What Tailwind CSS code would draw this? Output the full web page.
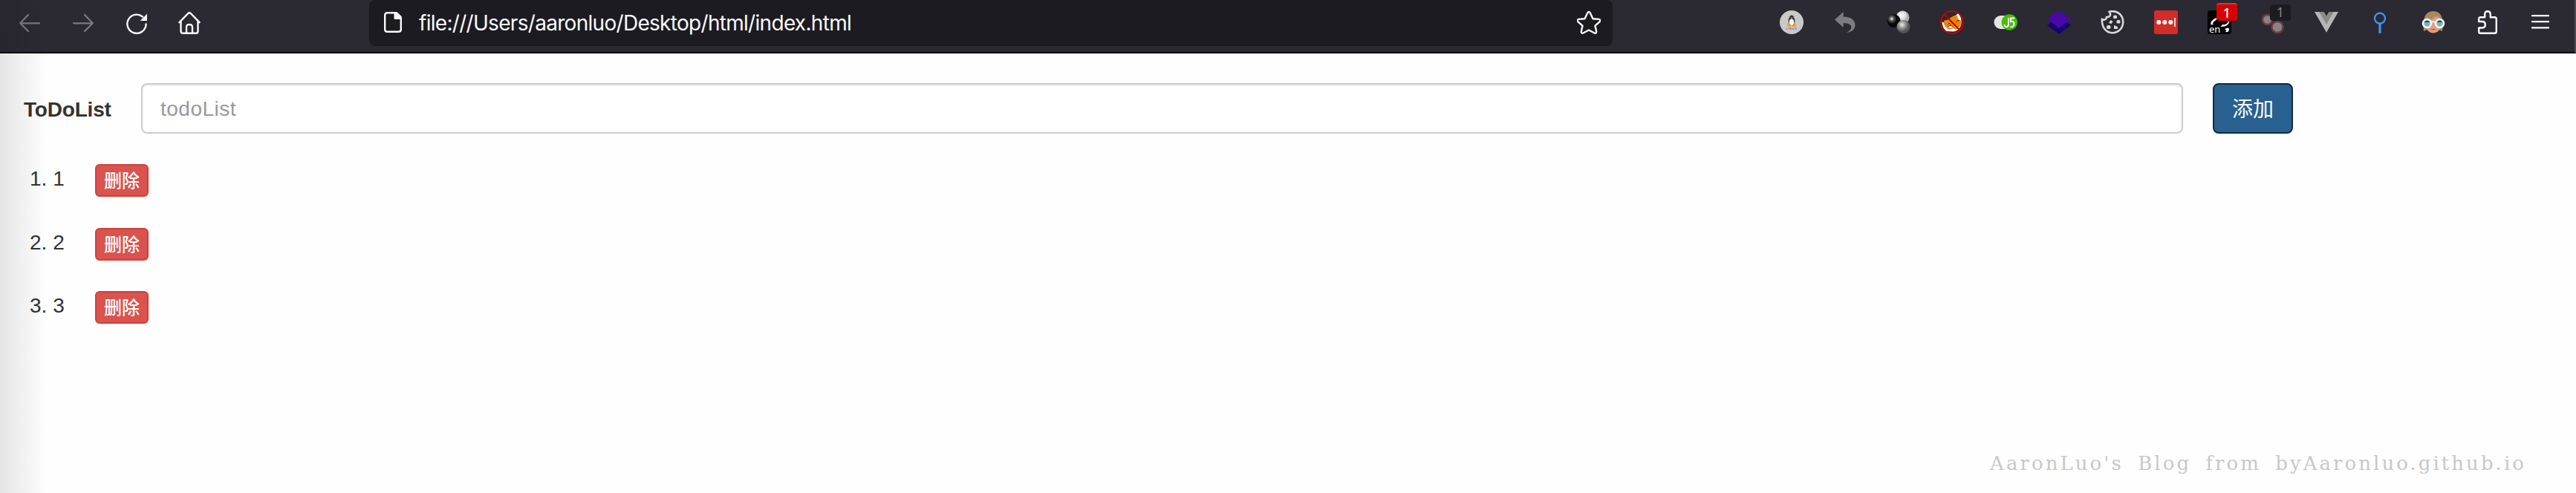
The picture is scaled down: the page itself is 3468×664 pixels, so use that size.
<!DOCTYPE html>
<html lang="zh">
<head>
<meta charset="utf-8">
<title>ToDoList</title>
<script src="https://cdn.jsdelivr.net/npm/@tailwindcss/browser@4"></script>
</head>
<body class="relative flex h-[664px] w-[3468px] flex-col overflow-hidden bg-[#fefefe] text-[28px] text-[#333] font-['Liberation_Sans','Noto_Sans_CJK_SC',sans-serif]">
<header class="flex h-[72px] shrink-0 items-start border-b-2 border-r-2 border-b-[#0c0b10] border-r-[#4d4c54] bg-[#2b2a33]">
  <nav class="flex w-[497px] shrink-0 gap-10 pl-6 pt-[14px]">
    <svg class="size-8" viewBox="0 0 32 32" fill="none" stroke="#7b7a80" stroke-width="2.2" stroke-linecap="round" stroke-linejoin="round"><path d="M29 17.3H3.2M14 6 3.2 17.3 14 28"/></svg>
    <svg class="size-8" viewBox="0 0 32 32" fill="none" stroke="#7b7a80" stroke-width="2.2" stroke-linecap="round" stroke-linejoin="round"><path d="M3 17.3h25.800M18 6l10.800 11.300L18 28"/></svg>
    <svg class="size-8" viewBox="0 0 32 32" fill="none" stroke="#fbfbfe" stroke-width="2.400" stroke-linecap="round"><path d="M24 8.500A12.600 12.600 0 1 0 28.600 18.500"/><path d="M30 4.500v9.500h-9.300z" fill="#fbfbfe" stroke="none"/></svg>
    <svg class="size-8" viewBox="0 0 32 32" fill="none" stroke="#fbfbfe" stroke-width="2.400" stroke-linecap="round" stroke-linejoin="round"><path d="M1.500 16.200 13.300 4q1.700-1.500 3.400 0L28.500 16.200M3.500 14.500V28q0 2.800 2.800 2.800h17.400q2.800 0 2.800-2.800V14.500M11 30.500V22.500q0-3.500 4-3.500t4 3.500v8"/></svg>
  </nav>
  <div class="flex h-[62px] w-[1674px] shrink-0 items-start rounded-lg bg-[#1c1b22] pl-[18px] pt-[14px]">
    <svg class="size-8 shrink-0" viewBox="0 0 32 32"><path d="M18 3.200H6.500Q3.200 3.200 3.200 6.500v19q0 3.300 3.300 3.300h15q3.300 0 3.300-3.300V11" fill="none" stroke="#fbfbfe" stroke-width="2.400"/><path d="M15.500 2h3q1 0 2 1l4.500 4.500q1 1 1 2V12h-9q-1.500 0-1.500-1.500z" fill="#fbfbfe"/></svg>
    <div class="ml-[17px] h-8 grow whitespace-nowrap font-['Inter',sans-serif] text-[28px] leading-[34px] tracking-[-0.700px] text-[#fbfbfe]">file:///Users/aaronluo/Desktop/html/index.html</div>
    <svg class="mr-4 size-8 shrink-0" viewBox="0 0 32 32" fill="none" stroke="#fbfbfe" stroke-width="2.400" stroke-linejoin="round"><path d="M14.200 3.500q1.800-3.200 3.600 0l3.700 7.700 8 .7q3.300.8 1 3.400l-6 5.400 1.700 7.700q0 3.200-3 1.900L16 26.500l-7.200 3.800q-3 1.300-3-1.900l1.700-7.700-6-5.400q-2.300-2.600 1-3.400l8-.7z"/></svg>
  </div>
  <div class="ml-[225px] flex gap-10 pt-[14px]">
    <svg class="size-8" viewBox="0 0 32 32"><circle cx="16" cy="16" r="16" fill="#c9c9c9"/><ellipse cx="16" cy="14" rx="4.400" ry="6.500" fill="#3a3a3a"/><circle cx="16" cy="9" r="2.600" fill="#333"/><ellipse cx="16" cy="16" rx="3.200" ry="4.600" fill="#fff"/><path d="M14.300 9.500h3.400L16 11.500zM10.800 17.500l2-.5 3 4-1.500 1-4.500-1zM21.200 17.500l-2-.5-3 4 1.500 1 4.500-1z" fill="#f39a0b"/><text x="16" y="26.300" text-anchor="middle" font-size="4" letter-spacing=".6" fill="#555" font-family="Inter">LINUX</text></svg>
    <svg class="size-8" viewBox="0 0 32 32"><path d="M2 12.500 13.700 2v6.500C24 8.500 29.500 13 29.500 19.500c0 6-5 10.500-11.500 10 4-1.500 6.300-4 6.300-7 0-3.500-4-5.500-10.600-5.300V23z" fill="#7c7b80"/></svg>
    <svg class="size-8" viewBox="0 0 32 32"><defs><radialGradient id="w" cx=".4" cy=".35"><stop offset="0" stop-color="#fff"/><stop offset=".6" stop-color="#ddd"/><stop offset="1" stop-color="#aaa"/></radialGradient><radialGradient id="k" cx=".35" cy=".35"><stop offset="0" stop-color="#eee"/><stop offset=".35" stop-color="#555"/><stop offset=".75" stop-color="#080808"/></radialGradient><radialGradient id="g" cx=".4" cy=".35"><stop offset="0" stop-color="#eee"/><stop offset=".5" stop-color="#999"/><stop offset="1" stop-color="#555"/></radialGradient></defs><circle cx="21.500" cy="9.500" r="9" fill="url(#w)"/><circle cx="9.500" cy="14" r="9" fill="url(#k)"/><circle cx="22.500" cy="22" r="9" fill="url(#g)"/></svg>
    <svg class="size-8" viewBox="0 0 32 32"><path d="M24 4q5 4 4.500 14-2 9-10 10.500L8 28Q3 23 2.500 16l7 1z" fill="#fff"/><path d="M5 14 12 12q4-5 10-5.500L25 13l4 1q0 6-4 9-3 5-7 1-7 3-9 0-5-3-4-10z" fill="#ee8509"/><path d="M2.500 14 6 21l4 4-5-2zM24 5l4 8-4-2z" fill="#fff"/><path d="m10 19 2-2 2 2m7-3 3-3 2 1m-16 8 4-2 3 2" fill="none" stroke="#49270b"/><path d="m10 22 5-1 2 2-3 1z" fill="#eee"/><circle cx="16" cy="16" r="15" fill="none" stroke="#c40000" stroke-width="2"/><path d="m5.500 5.500 21 21" stroke="#c40000" stroke-width="2"/></svg>
    <svg class="size-8" viewBox="0 0 32 32"><rect x=".5" y="7" width="24" height="18" rx="9" fill="#e4e4e4"/><circle cx="21.300" cy="16" r="10.700" fill="#45bd00"/><path d="M20 10v9q0 3-3 3-2.300 0-2.500-3M28 10.500h-5V15h2q2.500 0 2.500 3t-2.500 4h-2.500" fill="none" stroke="#fff" stroke-width="2"/></svg>
    <svg class="size-8" viewBox="0 0 32 32"><path d="m16 8.500 16 11.500-16 12L0 20z" fill="#1c0071"/><path d="m16 0 16 11.700-16 12-16-12z" fill="#4709a8"/></svg>
    <svg class="size-8" viewBox="0 0 32 32"><path d="M11.500 1.800C22-1 30.500 6 30.200 16 30 25 23 30.300 15.500 30.200 7 30 1.500 23 1.800 11.500q3 2.300 5 .2 1.500-1.200 1-2.700 3.700 0 5-2.200 1-2.500-1.300-5z" fill="none" stroke="#d8d8da" stroke-width="2.600" stroke-linejoin="round"/><g fill="#d8d8da"><rect x="17" y="6.500" width="5" height="4.500" rx="1.500"/><rect x="21.500" y="13" width="5" height="4.500" rx="1.500"/><path d="m11 17 2.500-4 3 2-2 3z"/><rect x="8" y="20" width="5.500" height="5" rx="1.800"/><path d="m18 20 5 2v3h-5z"/></g></svg>
    <svg class="size-8" viewBox="0 0 32 32"><rect width="32" height="32" rx="2.500" fill="#d32d27"/><g fill="#fff"><circle cx="6.300" cy="16" r="3"/><circle cx="14.300" cy="16" r="3"/><circle cx="22.300" cy="16" r="3"/><path d="M27.200 10h1.500v12h-1.500z"/></g></svg>
    <div class="relative size-8"><svg class="size-8 overflow-visible" viewBox="0 0 32 32"><rect width="32" height="32" rx="4" fill="#000"/><path d="M12 10Q4 13 4 19l4 .5Q5 17 12 12.500zM28.500 14.500q-2 4-7 5l-1-1-3 3.500 6-.5q5-2 6-7zM23 26q1.500-3 5-2.500 2 2 0 5-3 1.500-4 0l1.500-2z" fill="#fff"/><text x="2" y="29.800" font-size="13" fill="#fff" font-family="Noto Sans">en</text></svg><span class="absolute -top-[10px] left-3 h-6 w-7 rounded-[4px] border-t-2 border-[#e83030] bg-[#d70000] text-center font-['Noto_Sans'] text-[18px] font-medium leading-[22px] text-white">1</span></div>
    <div class="relative size-8"><svg class="size-8" viewBox="0 0 32 32"><g fill="#858489" stroke="#713a43" stroke-width="2.500"><circle cx="8.500" cy="12.500" r="6.500"/><circle cx="22" cy="22.500" r="7.500"/></g></svg><span class="absolute -top-2 left-3 h-[22px] w-7 rounded-[4px] bg-[#1c1b20] text-center font-['Noto_Sans'] text-[18px] leading-[21px] text-[#858489]">1</span></div>
    <svg class="size-8" viewBox="0 0 32 32"><path d="M0 2h12.400L16 8l3.600-6H32L16 29.700z" fill="#b5b5b5"/><path d="M6.300 2h6.100L16 8l3.600-6h6.100L16 18.700z" fill="#8a8a8c"/></svg>
    <svg class="size-8" viewBox="0 0 32 32" fill="none" stroke="#3e97fb"><circle cx="16" cy="10.700" r="7" stroke-width="2.200"/><path d="M16 18v11.500" stroke-width="3.200" stroke-linecap="round"/></svg>
    <svg class="size-8" viewBox="0 0 32 32"><path d="M3 28Q0 1 16 1q15.500 0 12 27l-5-2H8z" fill="#a58a60"/><path d="M5 14q8 0 14-6 4 0 8 5 0 17-11 17.500Q5 30 5 14z" fill="#e39d78"/><g fill="#6fb7bf" stroke="#f4f8f8" stroke-width="2.600"><circle cx="7.500" cy="17.500" r="5.500"/><circle cx="24.500" cy="17.500" r="5.500"/></g><path d="M3.500 16q4-5 8 0zM20.500 16q4-5 8 0z" fill="#28454d"/><path d="M13 16q3-1.500 6 0" stroke="#f4f8f8" stroke-width="2" fill="none"/><path d="M12.500 25.500q3.500-1.500 7 0-3.500 2-7 0z" fill="#b95f4e"/></svg>
    <svg class="size-8" viewBox="0 0 32 32" fill="none" stroke="#fbfbfe" stroke-width="2.400" stroke-linejoin="round"><path d="M5.200 15V11.500q0-2.300 2.300-2.300h5.700V5.500Q13.200 1.200 17 1.200t3.800 4.300v3.700h5.700q2.300 0 2.300 2.300v17q0 2.300-2.300 2.300h-19q-2.300 0-2.300-2.300V23.500H9.500q4.300 0 4.300-4.250T9.500 15z"/></svg>
    <svg class="size-8" viewBox="0 0 32 32" stroke="#fbfbfe" stroke-width="2.200" stroke-linecap="round"><path d="M5 7.200h22M5 15.200h22M5 23.400h22"/></svg>
  </div>
</header>
<main class="flex grow flex-col pt-10">
  <form class="flex h-[68px] items-center">
    <label class="w-[190px] pl-8 pt-[3px] font-bold tracking-[-0.200px]">ToDoList</label>
    <input type="text" placeholder="todoList" class="h-[68px] w-[2749px] rounded-lg border-2 border-[#ccc] bg-white px-6 pt-[2px] tracking-[0.500px] shadow-[inset_0_2px_2px_rgba(0,0,0,0.075)] placeholder:text-[#999]">
    <button type="button" class="ml-10 h-[68px] w-[108px] rounded-lg border-2 border-[#122b40] bg-[#286090] pt-1 leading-none text-white">添加</button>
  </form>
  <ol class="mt-[41px] flex flex-col gap-[41.500px]">
    <li class="flex h-11 items-start pl-10"><span class="w-[88px] leading-10">1. 1</span><button class="h-11 w-[72px] rounded-md border-2 border-[#d43f3a] bg-[#d9534f] pt-[2px] text-2xl font-medium leading-none text-white">删除</button></li>
    <li class="flex h-11 items-start pl-10"><span class="w-[88px] leading-10">2. 2</span><button class="h-11 w-[72px] rounded-md border-2 border-[#d43f3a] bg-[#d9534f] pt-[2px] text-2xl font-medium leading-none text-white">删除</button></li>
    <li class="flex h-11 items-start pl-10"><span class="w-[88px] leading-10">3. 3</span><button class="h-11 w-[72px] rounded-md border-2 border-[#d43f3a] bg-[#d9534f] pt-[2px] text-2xl font-medium leading-none text-white">删除</button></li>
  </ol>
  <footer class="mt-auto flex h-[60px] justify-end pr-[67px]"><p class="whitespace-nowrap font-['DejaVu_Serif',serif] text-[26px] leading-[41px] tracking-[3.050px] [word-spacing:8px] text-[#c8c8c8]">AaronLuo's Blog from byAaronluo.github.io</p></footer>
</main>
<div class="pointer-events-none absolute inset-y-0 left-0 w-[64px] bg-linear-to-r from-black/10 to-transparent"></div>
</body>
</html>
